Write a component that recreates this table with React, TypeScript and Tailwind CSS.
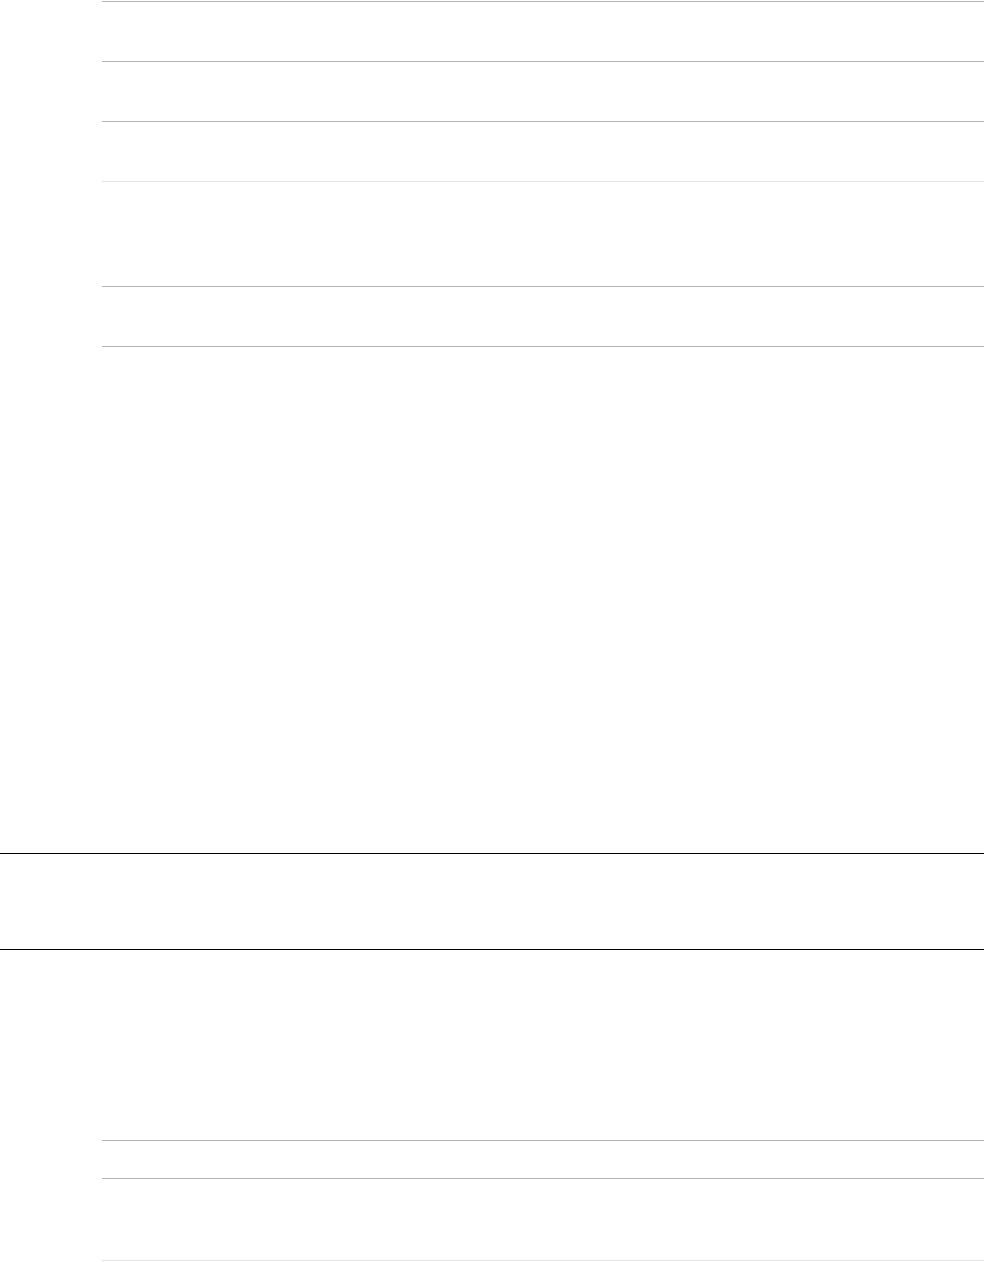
export default function App() {
  return (
    <div className="w-[984px] h-[1262px] bg-white overflow-hidden">
      <div className="ml-[102px] pt-px flex flex-col">
        <div className="h-[60px] border-t border-[#b4b4b4]" />
        <div className="h-[60px] border-t border-[#b4b4b4]" />
        <div className="h-[60px] border-t border-[#b4b4b4]" />
        <div className="h-[105px] border-t border-[#e3e3e3]" />
        <div className="h-[60px] border-t border-[#b4b4b4]" />
        <div className="h-[507px] border-t border-[#b4b4b4]" />
      </div>
      <div className="h-[97px] border-y border-black" />
      <div className="ml-[102px] flex flex-col">
        <div className="h-[190px]" />
        <div className="h-[38px] border-t border-[#b4b4b4]" />
        <div className="h-[82px] border-t border-[#b4b4b4]" />
        <div className="h-[2px] border-t border-[#e3e3e3]" />
      </div>
    </div>
  );
}
